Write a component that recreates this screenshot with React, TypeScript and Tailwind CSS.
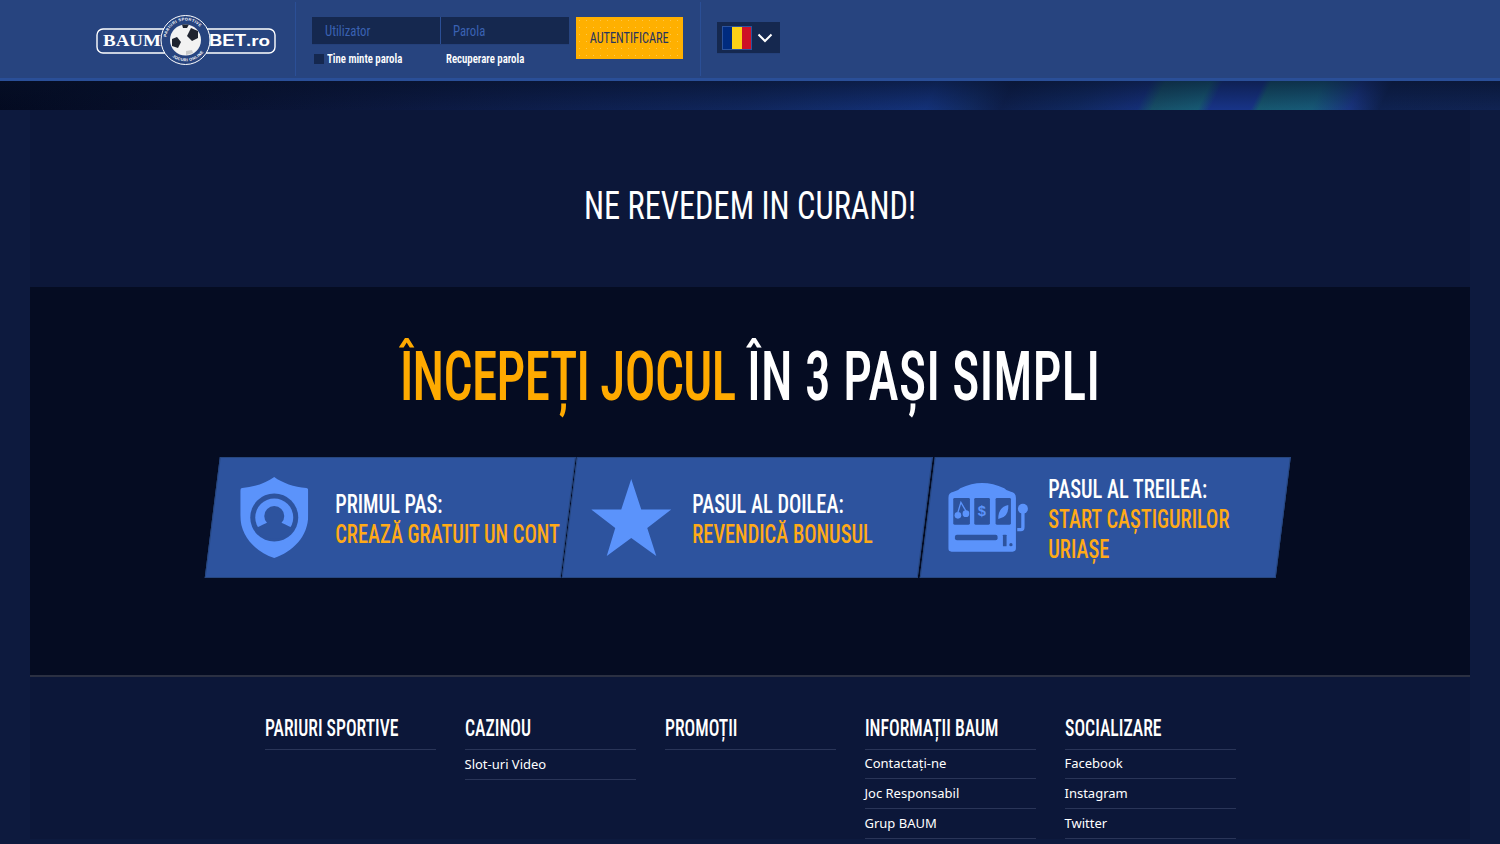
const oswald = "font-['Roboto_Condensed','Liberation_Sans',sans-serif]";

// Roboto Condensed squeezed further, nothing closer to the tall narrow face is installed
function Narrow({ children, className }: { children: React.ReactNode; className: string }) {
  return <span className={`inline-block whitespace-nowrap ${className}`}>{children}</span>;
}

function Logo() {
  return (
    <svg width="182" height="52" viewBox="0 0 182 52" className="shrink-0">
      <rect x="1" y="15" width="178" height="24" rx="6" fill="none" stroke="#fff" strokeWidth="1.4" />
      <circle cx="89.5" cy="26" r="24.5" fill="#27447f" stroke="#fff" strokeWidth="1" />
      <defs>
        <path id="logoTop" d="M70 26 A19.5 19.5 0 0 1 109 26" />
        <path id="logoBottom" d="M68 30 A22 22 0 0 0 111 30" />
      </defs>
      <text fontSize="4" fontWeight="700" fill="#fff" fontFamily="Liberation Sans" letterSpacing="0.4">
        <textPath href="#logoTop" startOffset="5%">PARIURI SPORTIVE</textPath>
      </text>
      <text fontSize="4" fontWeight="700" fill="#fff" fontFamily="Liberation Sans" letterSpacing="0.3">
        <textPath href="#logoBottom" startOffset="26%">JOCURI ONLINE</textPath>
      </text>
      <circle cx="89.5" cy="26" r="15.5" fill="#f2f2f2" />
      <polygon points="95,14 102,17 102,24 96,27 91,22" fill="#1f2430" />
      <polygon points="76,25 81,23 85,28 82,34 76,32" fill="#1f2430" />
      <polygon points="86,10.5 93,10.5 91,14 87,14" fill="#1f2430" />
      <polygon points="90,41 97,39 96,36 90,37" fill="#c9c9c9" />
      <text x="7" y="32" fontSize="17" fontWeight="700" fill="#fff" fontFamily="Liberation Serif" textLength="58" lengthAdjust="spacingAndGlyphs">BAUM</text>
      <text x="113" y="32" fontSize="17" fontWeight="700" fill="#fff" fontFamily="Liberation Sans" textLength="37" lengthAdjust="spacingAndGlyphs">BET</text>
      <text x="150" y="32" fontSize="14" fontWeight="700" fill="#fff" fontFamily="Liberation Sans" textLength="24" lengthAdjust="spacingAndGlyphs">.ro</text>
    </svg>
  );
}

function ShieldIcon() {
  return (
    <svg width="68" height="81" viewBox="0 0 68 81" className="shrink-0">
      <path d="M34 0 C42 6 54 10 66 11 Q68 11 68 14 V38 C68 60 52 75 34 81 C16 75 0 60 0 38 V14 Q0 11 2 11 C14 10 26 6 34 0 Z" fill="#5b93fb" />
      <circle cx="34" cy="40.5" r="24" fill="#2d539e" />
      <circle cx="34" cy="40.5" r="19" fill="#5b93fb" />
      <circle cx="34" cy="39" r="10" fill="#2d539e" />
      <path d="M15.5 51 Q24 47 28 45 L40 45 Q44 47 52.5 51 A21 21 0 0 1 15.5 51 Z" fill="#2d539e" />
    </svg>
  );
}

function StarIcon() {
  return (
    <svg width="80" height="77" viewBox="0 0 80 77" className="shrink-0">
      <polygon points="40,0 50,30.5 80,30.5 56,49 65,77 40,59 15.5,77 24,49 0,30.5 30,30.5" fill="#5b93fb" />
    </svg>
  );
}

function SlotIcon() {
  return (
    <svg width="80" height="69" viewBox="0 0 240 207" className="shrink-0">
      <path d="M0 45 Q0 28 16 26 Q30 24 36 16 Q70 0 102 0 Q134 0 168 16 Q174 24 188 26 Q203 28 203 45 V196 Q203 206 193 206 H10 Q0 206 0 196 Z" fill="#5b93fb" />
      <rect x="15" y="45" width="50" height="80" rx="4" fill="#2d539e" />
      <rect x="78" y="45" width="47" height="80" rx="4" fill="#2d539e" />
      <rect x="142" y="45" width="46" height="80" rx="4" fill="#2d539e" />
      <circle cx="29" cy="97" r="10" fill="#5b93fb" />
      <circle cx="53" cy="92" r="10" fill="#5b93fb" />
      <path d="M29 88 L38 58 L53 84" fill="none" stroke="#5b93fb" strokeWidth="4" />
      <text x="101" y="100" textAnchor="middle" fontSize="44" fontWeight="700" fill="#5b93fb" fontFamily="Liberation Sans">$</text>
      <path d="M150 108 Q150 72 180 66 Q182 100 156 106 Z" fill="#5b93fb" />
      <rect x="20" y="155" width="128" height="17" rx="6" fill="#2d539e" />
      <rect x="164" y="155" width="11" height="35" rx="2" fill="#2d539e" />
      <circle cx="188" cy="185" r="5" fill="#2d539e" />
      <path d="M207 140 H218 Q224 140 224 132 V90" fill="none" stroke="#5b93fb" strokeWidth="10" />
      <circle cx="224" cy="77" r="15" fill="#5b93fb" />
    </svg>
  );
}

function StepCard({ icon, iconClass, title, lines, textClass }: { icon: React.ReactNode; iconClass: string; title: string; lines: string[]; textClass: string }) {
  return (
    <div className="h-[121px] w-[355.5px] shrink-0 skew-x-[-7.1deg] border border-[#27477f] bg-[#2d539e]">
      <div className={`flex h-full skew-x-[7.1deg] items-center ${iconClass}`}>
        {icon}
        <div className={`${oswald} ${textClass} pt-[3px] text-[26px] font-medium leading-[30px] text-[#ffaa17]`}>
          <div className="text-white">
            <Narrow className="origin-left scale-x-[0.785]">{title}</Narrow>
          </div>
          {lines.map((line) => (
            <div key={line}>
              <Narrow className="origin-left scale-x-[0.785]">{line}</Narrow>
            </div>
          ))}
        </div>
      </div>
    </div>
  );
}

function FooterColumn({ title, items, tight }: { title: string; items: string[]; tight?: boolean }) {
  return (
    <div className="w-[171px]">
      <h3 className={`${oswald} h-[41px] border-b border-[#2a3558] text-[23px] font-medium leading-[40px] text-white`}>
        <Narrow className="origin-left scale-x-[0.77]">{title}</Narrow>
      </h3>
      <ul className={tight ? '-mt-px' : ''}>
        {items.map((item) => (
          <li key={item} className="h-[30px] border-b border-[#2a3558] font-['Noto_Sans',sans-serif] text-[13px] leading-[29px] text-white">
            {item}
          </li>
        ))}
      </ul>
    </div>
  );
}

export default function App() {
  return (
    <div className="h-[844px] overflow-hidden bg-[#0d1a3e]">
      {/* Top bar */}
      <header className="flex h-[81px] items-start border-b-[3px] border-[#2a4f98] bg-[#27447f] pt-[2px]">
        <div className="flex h-[74px] w-[296px] items-center justify-end border-r border-[#2b4f96] pr-[17px] pt-[2px]">
          <Logo />
        </div>
        <div className={`${oswald} ml-[16px] mt-[15px] w-[257px]`}>
          <div className="flex h-[28px] border-b border-[#24407a] bg-[#15284f] text-[15px] leading-[28px] text-[#3a62b3]">
            <div className="w-[129px] border-r border-[#2b4f96] pl-[13px]">
              <Narrow className="origin-left scale-x-[0.85]">Utilizator</Narrow>
            </div>
            <div className="pl-[12px]">
              <Narrow className="origin-left scale-x-[0.85]">Parola</Narrow>
            </div>
          </div>
          <div className="mt-[5px] flex items-center text-[12px] font-semibold text-white">
            <span className="ml-[2px] h-[10px] w-[10px] bg-[#15284f]" />
            <span className="ml-[3px] w-[119px]">
              <Narrow className="origin-left scale-x-[0.9]">Tine minte parola</Narrow>
            </span>
            <Narrow className="origin-left scale-x-[0.9]">Recuperare parola</Narrow>
          </div>
        </div>
        <button className={`${oswald} ml-[7px] mt-[15px] h-[42px] w-[107px] bg-[#ffb000] bg-[radial-gradient(#ffc84a_0.6px,transparent_0.7px)] bg-[length:7px_7px] text-[15px] text-[#27345f]`}>
          <Narrow className="scale-x-[0.82]">AUTENTIFICARE</Narrow>
        </button>
        <div className="ml-[17px] h-[74px] w-px bg-[#2b4f96]" />
        <div className="ml-[16px] mt-[20px] flex h-[32px] w-[63px] items-center border-b border-[#24407a] bg-[#15284f] pl-[5px]">
          <div className="flex h-[24px] w-[30px] border border-[#2b539e]">
            <span className="flex-1 bg-[#002b7f]" />
            <span className="flex-1 bg-[#fcd116]" />
            <span className="flex-1 bg-[#ce1126]" />
          </div>
          <svg width="16" height="10" viewBox="0 0 16 10" className="ml-[5px]">
            <polyline points="1.5,1.5 8,8 14.5,1.5" fill="none" stroke="#fff" strokeWidth="2" />
          </svg>
        </div>
      </header>

      {/* Banner strip */}
      <div className="h-[29px] bg-[linear-gradient(to_bottom,rgba(6,16,40,0.55),rgba(6,16,40,0)),linear-gradient(116deg,#030a20_0%,#060e28_8%,#0b173c_25%,#0e2050_40%,#10265c_50%,#14327a_62%,#11295f_65%,#0e1f4c_67%,#10285f_72%,#152f78_76%,#175068_77%,#175a74_80%,#183488_80.8%,#183488_83.5%,#175870_84%,#175a78_87.5%,#1a3580_90%,#0f2250_92%,#102352_100%)]" />

      <main className="mx-auto flex w-[1440px] flex-col items-center bg-[#0c1739]">
        <h1 className={`${oswald} mt-[68px] h-[66px] text-[39px] leading-[56px] text-white`}>
          <Narrow className="scale-x-[0.83]">NE REVEDEM IN CURAND!</Narrow>
        </h1>

        <section className="mt-[43px] flex h-[390px] w-[1440px] flex-col items-center border-b-2 border-[#2b3042] bg-[#050c22]">
          <h2 className={`${oswald} mt-[48px] h-[78px] text-[68px] font-medium leading-[84px] text-white`}>
            <Narrow className="scale-x-[0.753]">
              <span className="tracking-[-0.85px] text-[#ffaa00]">ÎNCEPEȚI JOCUL</span> <span className="tracking-[0.5px]">ÎN 3 PAȘI SIMPLI</span>
            </Narrow>
          </h2>
          <div className="mt-[44px] flex -translate-x-[2.75px] gap-[2px]">
            <StepCard icon={<ShieldIcon />} iconClass="pl-[27px]" textClass="ml-[27px]" title="PRIMUL PAS:" lines={['CREAZĂ GRATUIT UN CONT']} />
            <StepCard icon={<StarIcon />} iconClass="pl-[21px]" textClass="ml-[21px]" title="PASUL AL DOILEA:" lines={['REVENDICĂ BONUSUL']} />
            <StepCard icon={<SlotIcon />} iconClass="pl-[20px]" textClass="ml-[20px]" title="PASUL AL TREILEA:" lines={['START CAȘTIGURILOR', 'URIAȘE']} />
          </div>
        </section>

        {/* Footer links */}
        <footer className="mt-[32px] flex gap-[29px]">
          <FooterColumn title="PARIURI SPORTIVE" items={[]} />
          <FooterColumn title="CAZINOU" items={['Slot-uri Video']} />
          <FooterColumn title="PROMOȚII" items={[]} />
          <FooterColumn title="INFORMAȚII BAUM" items={['Contactați-ne', 'Joc Responsabil', 'Grup BAUM']} tight />
          <FooterColumn title="SOCIALIZARE" items={['Facebook', 'Instagram', 'Twitter']} tight />
        </footer>
      </main>
    </div>
  );
}
